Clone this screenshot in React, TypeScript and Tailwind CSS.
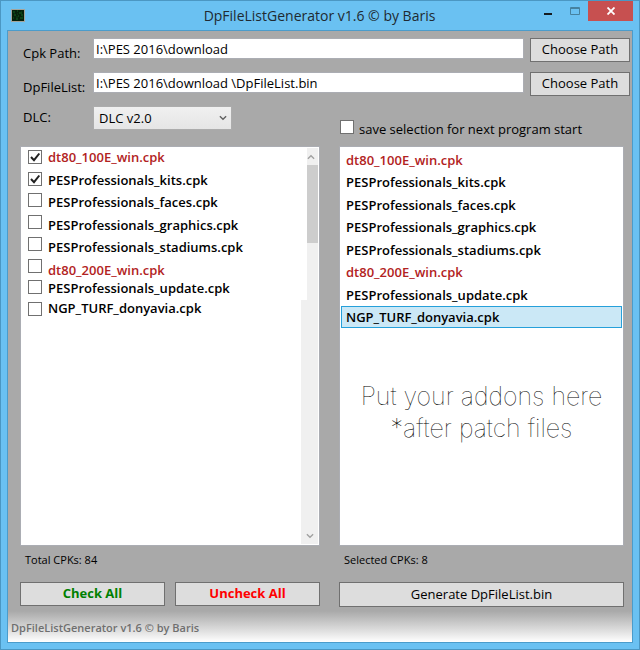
import { useState } from "react";

const files = [
  { name: "dt80_100E_win.cpk", base: true },
  { name: "PESProfessionals_kits.cpk", base: false },
  { name: "PESProfessionals_faces.cpk", base: false },
  { name: "PESProfessionals_graphics.cpk", base: false },
  { name: "PESProfessionals_stadiums.cpk", base: false },
  { name: "dt80_200E_win.cpk", base: true },
  { name: "PESProfessionals_update.cpk", base: false },
  { name: "NGP_TURF_donyavia.cpk", base: false },
];

const checkBox =
  "block size-[14px] shrink-0 appearance-none border border-[#707070] bg-white";
const greyButton =
  "flex items-center justify-center border border-[#707070] bg-[#dddddd] text-[13px] whitespace-nowrap";

function Chevron({ up = false, color }: { up?: boolean; color: string }) {
  return (
    <svg width="8" height="6" viewBox="0 0 9 6" fill="none" stroke={color} strokeWidth="1.5" aria-hidden="true">
      <path d={up ? "M1 5 4.5 1.5 8 5" : "M1 1 4.5 4.5 8 1"} />
    </svg>
  );
}

function TitleBar() {
  return (
    <header className="flex h-[29px] items-start">
      <div className="flex w-[101px] pt-2 pl-1">
        <svg width="14" height="13" viewBox="0 0 14 13" aria-hidden="true">
          <rect x=".5" y=".5" width="13" height="12" fill="#06200b" stroke="#a4a49b" />
          <path d="M2 3h2M6 2h1M8 4h3M3 6h2M7 7h1M10 6h2M2 9h1M5 10h2M9 9h3" stroke="#126323" />
          <path d="M3 4h1M6 5h1M10 3h1M5 8h2M11 8h1" stroke="#0b4518" />
        </svg>
      </div>
      <h1 className="flex-1 pt-[5px] text-center text-sm leading-5 whitespace-nowrap text-[#202a31]">
        DpFileListGenerator v1.6 © by Baris
      </h1>
      <div className="flex">
        <button aria-label="Minimize" className="flex h-[19px] w-[26px] items-center justify-center pt-1 pl-2">
          <svg width="8" height="8" viewBox="0 0 8 8" aria-hidden="true">
            <path d="M0 5h8" stroke="#151b20" strokeWidth="2" />
          </svg>
        </button>
        <button aria-label="Maximize" className="flex h-[19px] w-[27px] items-center justify-center pl-2">
          <svg width="10" height="8" viewBox="0 0 10 8" fill="none" aria-hidden="true">
            <path d="M.5 .5h9v7h-9zM0 1.5h10" stroke="#46819f" />
          </svg>
        </button>
        <button aria-label="Close" className="mr-[6px] ml-1 flex h-5 w-[45px] items-center justify-center bg-[#c75050]">
          <svg width="8" height="8" viewBox="0 0 8 8" aria-hidden="true">
            <path d="M.5 .5l7 7M7.5 .5l-7 7" stroke="#fff" strokeWidth="1.8" />
          </svg>
        </button>
      </div>
    </header>
  );
}

function PathRow({ id, label, value }: { id: string; label: string; value: string }) {
  return (
    <div className="flex h-6 items-start">
      <label htmlFor={id} className="w-[70px] shrink-0 pt-[5px] text-[13px] leading-5 whitespace-nowrap">
        {label}
      </label>
      <input
        id={id}
        defaultValue={value}
        className="h-[21px] min-w-0 flex-1 border border-[#abadb3] bg-white px-[2px] text-[13px] leading-[18px] outline-none"
      />
      <button className={greyButton + " ml-[6px] h-6 w-[100px]"}>Choose Path</button>
    </div>
  );
}

function FileLabel({ index }: { index: number }) {
  const file = files[index];
  return (
    <label
      htmlFor={"file-" + index}
      className={"block text-[13px] leading-[18px] font-semibold " + (file.base ? "text-[#b22222]" : "text-black")}
    >
      {file.name}
    </label>
  );
}

function AvailableFiles() {
  const [checked, setChecked] = useState(files.map((_, i) => i < 2));
  return (
    <div className="flex h-[400px] border border-[#abadb3] bg-white">
      <div className="flex flex-1 gap-[6px] pl-[7px]">
        <div className="mt-[3px] flex h-[166px] flex-col justify-between">
          {files.map((file, i) => (
            <div key={file.name} className="grid">
              <input
                id={"file-" + i}
                type="checkbox"
                checked={checked[i]}
                onChange={() => setChecked(checked.map((c, j) => (j === i ? !c : c)))}
                className={checkBox + " col-start-1 row-start-1"}
              />
              {checked[i] && (
                <svg
                  width="14"
                  height="14"
                  viewBox="0 0 14 14"
                  fill="none"
                  className="pointer-events-none col-start-1 row-start-1"
                  aria-hidden="true"
                >
                  <path d="M3 7l3 3.2L11.3 3.5" stroke="#212121" strokeWidth="2" />
                </svg>
              )}
            </div>
          ))}
        </div>
        <div className="pt-px">
          <div className="flex h-[131px] flex-col justify-between">
            {[0, 1, 2, 3, 4, 5].map((i) => (
              <FileLabel key={i} index={i} />
            ))}
          </div>
          <div className="flex flex-col gap-[2px]">
            <FileLabel index={6} />
            <FileLabel index={7} />
          </div>
        </div>
      </div>
      <div className="my-px mr-px flex w-[17px] flex-col items-end" aria-hidden="true">
        <div className="flex h-[17px] w-[11px] items-center bg-[#f0f0f0]">
          <Chevron up color="#a0a0a0" />
        </div>
        <div className="h-[78px] w-[11px] bg-[#cdcdcd]" />
        <div className="h-[57px] w-[11px] bg-[#f0f0f0]" />
        <div className="flex w-full flex-1 items-end justify-center bg-[#f0f0f0] pb-[5px]">
          <Chevron color="#a0a0a0" />
        </div>
      </div>
    </div>
  );
}

function SelectedFiles() {
  return (
    <div className="h-[400px] border border-[#abadb3] bg-white px-px">
      <ul className="flex h-[181px] flex-col justify-between pt-[2px]">
        {files.map((file, i) => (
          <li
            key={file.name}
            className={
              "h-[22px] border pl-1 text-[13px] leading-5 font-semibold " +
              (i === 7 ? "border-[#26a0da] bg-[#cbe8f6] " : "border-transparent ") +
              (file.base ? "text-[#b22222]" : "text-black")
            }
          >
            {file.name}
          </li>
        ))}
      </ul>
      <p className="pt-[52px] text-center font-['Inter',sans-serif] text-[25px] leading-8 font-thin">
        Put your addons here
        <br />
        *after patch files
      </p>
    </div>
  );
}

export default function App() {
  return (
    <div className="flex min-h-screen flex-col border border-[#4b97c3] bg-[#6ac1f2] px-[6px] pb-[6px] font-['Open_Sans','Noto_Sans',sans-serif] text-black">
      <div className="-mr-[6px]">
        <TitleBar />
      </div>
      <main className="flex flex-1 flex-col border border-[#4b9ccb] bg-[#a9a9a9]">
        <div className="flex flex-col gap-[10px] pt-[7px] pr-[2px] pl-[15px]">
          <PathRow id="cpk" label="Cpk Path:" value={"I:\\PES 2016\\download"} />
          <PathRow id="list" label="DpFileList:" value={"I:\\PES 2016\\download \\DpFileList.bin"} />
        </div>
        <div className="grid grid-cols-[300fr_285fr] gap-x-[19px] pr-[8px] pl-3">
          <div className="flex h-[50px] items-start pt-[10px] pl-[3px]">
            <label htmlFor="dlc" className="w-[70px] text-[13px] leading-[22px]">
              DLC:
            </label>
            <div className="grid w-[139px] items-center">
              <select
                id="dlc"
                className="col-start-1 row-start-1 h-6 w-full appearance-none border border-[#acacac] bg-linear-to-b from-[#f0f0f0] to-[#e5e5e5] pl-[5px] text-[13px] leading-[22px]"
              >
                <option>DLC v2.0</option>
              </select>
              <div className="pointer-events-none col-start-1 row-start-1 justify-self-end pr-[5px]">
                <Chevron color="#606060" />
              </div>
            </div>
          </div>
          <div className="flex items-end gap-[5px] pb-[7px] pl-px">
            <input id="save" type="checkbox" className={checkBox + " mb-[5px]"} />
            <label htmlFor="save" className="text-[13px] leading-5 whitespace-nowrap">
              save selection for next program start
            </label>
          </div>
          <AvailableFiles />
          <SelectedFiles />
          <p className="pt-[5px] pl-[5px] text-[11px] leading-[18px]">Total CPKs: 84</p>
          <p className="pt-[5px] pl-[5px] text-[11px] leading-[18px]">Selected CPKs: 8</p>
          <div className="grid grid-cols-2 gap-[10px] pt-[13px]">
            <button className={greyButton + " h-6 font-bold text-[#008000]"}>Check All</button>
            <button className={greyButton + " h-6 font-bold text-[#ff0000]"}>Uncheck All</button>
          </div>
          <div className="grid pt-[13px]">
            <button className={greyButton + " h-[25px]"}>Generate DpFileList.bin</button>
          </div>
        </div>
        <footer className="mt-auto h-[31px] bg-linear-to-b from-[#a9a9a9] to-white pl-[3px] text-[11px] leading-[34px] font-semibold text-[#6f6f6f]">
          DpFileListGenerator v1.6 © by Baris
        </footer>
      </main>
    </div>
  );
}
